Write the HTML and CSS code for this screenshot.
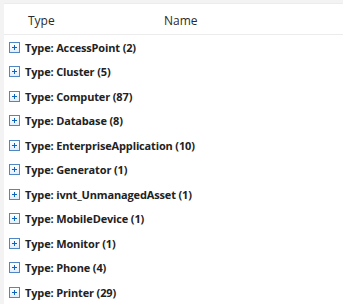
FILE: index.html
```html
<!DOCTYPE html>
<html lang="en">
<head>
  <meta charset="UTF-8"/>
  <title>Asset Grid</title>
  <link rel="stylesheet" href="styles.css">
</head>
<body>
  <div class="grid">
    <!-- HEADER -->
    <div class="grid-header">
      <div class="col col-type">Type</div>
      <div class="col col-name">Name</div>
    </div>

    <!-- GROUPS -->
    <div class="groups">
      <div class="group-row"><span class="expander"></span><span class="group-label">Type: AccessPoint (2)</span></div>
      <div class="group-row"><span class="expander"></span><span class="group-label">Type: Cluster (5)</span></div>
      <div class="group-row"><span class="expander"></span><span class="group-label">Type: Computer (87)</span></div>
      <div class="group-row"><span class="expander"></span><span class="group-label">Type: Database (8)</span></div>
      <div class="group-row"><span class="expander"></span><span class="group-label">Type: EnterpriseApplication (10)</span></div>
      <div class="group-row"><span class="expander"></span><span class="group-label">Type: Generator (1)</span></div>
      <div class="group-row"><span class="expander"></span><span class="group-label">Type: ivnt_UnmanagedAsset (1)</span></div>
      <div class="group-row"><span class="expander"></span><span class="group-label">Type: MobileDevice (1)</span></div>
      <div class="group-row"><span class="expander"></span><span class="group-label">Type: Monitor (1)</span></div>
      <div class="group-row"><span class="expander"></span><span class="group-label">Type: Phone (4)</span></div>
      <div class="group-row"><span class="expander"></span><span class="group-label">Type: Printer (29)</span></div>
    </div>
  </div>
</body>
</html>
```

FILE: styles.css
```css
body {
  margin: 0;
  padding: 0;
  background: #f3f3f3;
  font-family: 'Open Sans', sans-serif;
  color: #222;
  overflow: hidden;
}
.grid {
  margin: 3px 0 0 4px;
  border-top: 1px solid #ececec;
  background: #fff;
  min-height: 301px;
}
/* HEADER */
.grid-header {
  display: flex;
  align-items: center;
  height: 31px;
  padding-top: 3px;
  box-sizing: border-box;
  border-bottom: 1px solid #ececec;
  font-size: 12px;
  color: #2a2a2a;
}
.col-type {
  width: 136px;
  padding-left: 24px;
}
/* GROUPS */
.group-row {
  display: flex;
  align-items: center;
  height: 24.5px;
  padding-left: 5px;
}
.expander {
  width: 9px;
  height: 9px;
  border: 1px solid #4f87c4;
  background: linear-gradient(#ffffff, #e4eef9);
  position: relative;
  margin-right: 5px;
  flex-shrink: 0;
}
.expander::before,
.expander::after {
  content: "";
  position: absolute;
  background: #0f63b8;
}
.expander::before {
  left: 2px;
  top: 4px;
  width: 5px;
  height: 1px;
}
.expander::after {
  left: 4px;
  top: 2px;
  width: 1px;
  height: 5px;
}
.group-label {
  font-size: 11px;
  font-weight: 700;
  letter-spacing: -0.15px;
  color: #222;
  white-space: nowrap;
}
```
